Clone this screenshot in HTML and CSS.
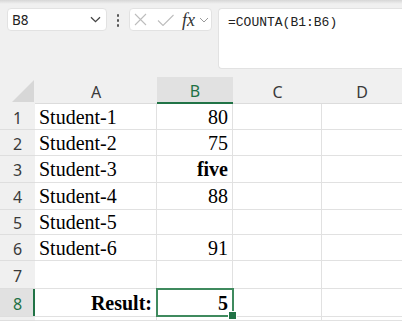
FILE: index.html
```html
<!DOCTYPE html>
<html lang="en">
<head>
  <meta charset="UTF-8" />
  <title>COUNTA</title>
  <link rel="stylesheet" href="styles.css">
</head>
<body>
  <div class="toolbar">
    <div class="namebox">
      <span>B8</span>
      <svg width="11" height="7" viewBox="0 0 11 7"><path d="M1 1.2l4.5 4.5 4.5-4.5" fill="none" stroke="#444" stroke-width="1.3"/></svg>
    </div>
    <div class="more"><i></i><i></i><i></i></div>
    <div class="fxbox">
      <svg class="cancel" width="13" height="13" viewBox="0 0 13 13"><path d="M1 1l11 11M12 1L1 12" fill="none" stroke="#bdbdbd" stroke-width="1.1"/></svg>
      <svg class="enter" width="17" height="12" viewBox="0 0 17 12"><path d="M1 6.5l5 5L16.5 1" fill="none" stroke="#bdbdbd" stroke-width="1.1"/></svg>
      <span class="fx">fx</span>
      <svg class="drop" width="10" height="6" viewBox="0 0 10 6"><path d="M1 1l4 4 4-4" fill="none" stroke="#9a9a9a" stroke-width="1"/></svg>
    </div>
    <div class="formula">=COUNTA(B1:B6)</div>
  </div>

  <div class="sheet">
    <div class="corner"><svg width="22" height="22" viewBox="0 0 22 22"><path d="M22 0V22H0Z" fill="#d7d7d7"/></svg></div>
    <div class="col">A</div><div class="col sel">B</div><div class="col">C</div><div class="col">D</div>

    <div class="row">1</div><div class="cell">Student-1</div><div class="cell num">80</div><div class="cell"></div><div class="cell last"></div>
    <div class="row">2</div><div class="cell">Student-2</div><div class="cell num">75</div><div class="cell"></div><div class="cell last"></div>
    <div class="row">3</div><div class="cell">Student-3</div><div class="cell num bold">five</div><div class="cell"></div><div class="cell last"></div>
    <div class="row">4</div><div class="cell">Student-4</div><div class="cell num">88</div><div class="cell"></div><div class="cell last"></div>
    <div class="row">5</div><div class="cell">Student-5</div><div class="cell num"></div><div class="cell"></div><div class="cell last"></div>
    <div class="row">6</div><div class="cell">Student-6</div><div class="cell num">91</div><div class="cell"></div><div class="cell last"></div>
    <div class="row">7</div><div class="cell"></div><div class="cell"></div><div class="cell"></div><div class="cell last"></div>
    <div class="row sel">8</div><div class="cell num bold">Result:</div><div class="cell num bold active">5</div><div class="cell"></div><div class="cell last"></div>
    <div class="row"></div><div class="cell"></div><div class="cell"></div><div class="cell"></div><div class="cell last"></div>
  </div>
</body>
</html>
```

FILE: styles.css
```css
* {
  box-sizing: border-box;
}
body {
  margin: 0;
  width: 402px;
  height: 321px;
  overflow: hidden;
  background: #fff;
  font-family: "Noto Sans", sans-serif;
}

/* formula bar */
.toolbar {
  height: 77px;
  display: flex;
  align-items: flex-start;
  padding: 8px 0 0 7px;
  background: linear-gradient(#d6d6d6, #f0f0f0 4px);
}
.namebox {
  width: 100px;
  height: 23px;
  display: flex;
  align-items: center;
  justify-content: space-between;
  padding: 0 5px 0 4px;
  background: #fff;
  border: 1px solid #e2e2e2;
  border-radius: 4px;
  font-size: 13.5px;
  color: #222;
}
.more {
  width: 22px;
  display: flex;
  flex-direction: column;
  align-items: center;
  gap: 2.5px;
  padding-top: 6px;
}
.more i {
  width: 2.5px;
  height: 2.5px;
  border-radius: 50%;
  background: #555;
}
.fxbox {
  width: 83px;
  height: 23px;
  display: flex;
  align-items: center;
  padding-left: 4px;
  background: #fff;
  border: 1px solid #e2e2e2;
  border-radius: 4px;
}
.enter {
  margin-left: 10px;
}
.fx {
  margin-left: 8px;
  font-family: "Liberation Serif", serif;
  font-style: italic;
  font-size: 18px;
  line-height: 18px;
  color: #333;
}
.drop {
  margin-left: 4px;
}
.formula {
  flex: 1;
  height: 61px;
  margin-left: 6px;
  padding: 6px 0 0 9px;
  background: #fff;
  border: 1px solid #e2e2e2;
  border-right: none;
  border-radius: 4px 0 0 4px;
  font-family: "Liberation Mono", monospace;
  font-size: 13px;
  line-height: 16px;
  color: #222;
}

/* grid */
.sheet {
  height: 244px;
  overflow: hidden;
  display: grid;
  grid-template-columns: 35px 122px 76px 89px 1fr;
  grid-template-rows: 27px 26px 26px 27px 27px 25px 26px 28px 28px 1fr;
}
.corner {
  background: #f0f0f0;
  display: flex;
  align-items: flex-end;
  justify-content: flex-end;
  padding: 0 1px 2px 0;
}
.col {
  background: #f0f0f0;
  border-bottom: 1px solid #dcdcdc;
  display: flex;
  align-items: center;
  justify-content: center;
  padding-top: 3px;
  font-size: 16px;
  line-height: 20px;
  color: #3a3a3a;
}
.col.sel {
  background: #e1e1e1;
  color: #1e7145;
  border-bottom: 2px solid #217346;
}
.row {
  background: #f0f0f0;
  border-bottom: 1px solid #dedede;
  display: flex;
  align-items: center;
  justify-content: center;
  padding-top: 2px;
  font-size: 16px;
  line-height: 20px;
  color: #3a3a3a;
}
.row.sel {
  background: #e1e1e1;
  color: #1e7145;
  box-shadow: inset -2px 0 #217346;
}
.cell {
  border-right: 1px solid #e1e1e1;
  border-bottom: 1px solid #e1e1e1;
  display: flex;
  align-items: center;
  padding: 0 4px;
  font-family: "Liberation Serif", serif;
  font-size: 20px;
  line-height: 20px;
  color: #000;
}
.cell.last {
  border-right: none;
}
.num {
  justify-content: flex-end;
}
.bold {
  font-weight: bold;
}
.active {
  position: relative;
}
.active::after {
  content: "";
  position: absolute;
  top: -1px;
  left: -1px;
  right: -2px;
  bottom: -1px;
  border: 2px solid #3f8a5e;
}
.active::before {
  content: "";
  position: absolute;
  right: -5px;
  bottom: -4px;
  width: 7px;
  height: 7px;
  background: #217346;
  border: 1px solid #fff;
  z-index: 1;
}
```
